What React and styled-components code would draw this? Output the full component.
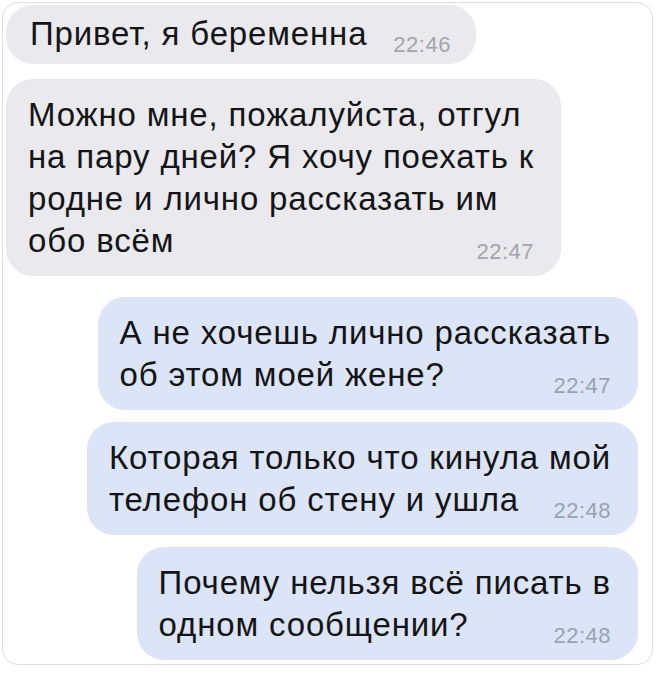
import React from "react";
import styled, { createGlobalStyle } from "styled-components";

const Global = createGlobalStyle`
  html, body { margin: 0; padding: 0; background: #ffffff; }
  body { font-family: "Liberation Sans", Arial, sans-serif; }
`;

const Card = styled.div`
  box-sizing: border-box;
  width: 651px;
  margin: 2px 0 0 2px;
  padding: 2px 14px 4px 3px;
  border: 1px solid #dedee2;
  border-radius: 16px;
  background: #ffffff;
  display: flex;
  flex-direction: column;
`;

const Bubble = styled.div`
  align-self: ${(p) => (p.$out ? "flex-end" : "flex-start")};
  margin-top: ${(p) => p.$gap || 0}px;
  padding: ${(p) => (p.$compact ? "8px 25px 9px 24px" : "15px 27px 14px 22px")};
  border-radius: 27px;
  background: ${(p) => (p.$out ? "#dce5f7" : "#eaeaee")};
  color: #141416;
  font-size: 33px;
  line-height: 42px;
  letter-spacing: 0.85px;
  display: flex;
  flex-direction: column;
`;

const Line = styled.div`
  white-space: nowrap;
`;

const LastLine = styled.div`
  display: flex;
  align-items: flex-end;
  justify-content: space-between;
  gap: 26px;
  white-space: nowrap;
`;

const Time = styled.span`
  font-size: 22px;
  line-height: 21px;
  color: ${(p) => (p.$out ? "#9aa2b2" : "#a3a3a9")};
  letter-spacing: 0.5px;
`;

const messages = [
  { out: false, compact: true, gap: 0, lines: ["Привет, я беременна"], time: "22:46" },
  {
    out: false,
    gap: 15,
    lines: [
      "Можно мне, пожалуйста, отгул",
      "на пару дней? Я хочу поехать к",
      "родне и лично рассказать им",
      "обо всём",
    ],
    time: "22:47",
  },
  { out: true, gap: 21, lines: ["А не хочешь лично рассказать", "об этом моей жене?"], time: "22:47" },
  { out: true, gap: 12, lines: ["Которая только что кинула мой", "телефон об стену и ушла"], time: "22:48" },
  { out: true, gap: 12, lines: ["Почему нельзя всё писать в", "одном сообщении?"], time: "22:48" },
];

export default function App() {
  return (
    <>
      <Global />
      <Card>
        {messages.map((m, i) => {
          const last = m.lines[m.lines.length - 1];
          const rest = m.lines.slice(0, -1);
          return (
            <Bubble key={i} $out={m.out} $gap={m.gap} $compact={m.compact}>
              {rest.map((l, j) => (
                <Line key={j}>{l}</Line>
              ))}
              <LastLine>
                <span>{last}</span>
                <Time $out={m.out}>{m.time}</Time>
              </LastLine>
            </Bubble>
          );
        })}
      </Card>
    </>
  );
}
